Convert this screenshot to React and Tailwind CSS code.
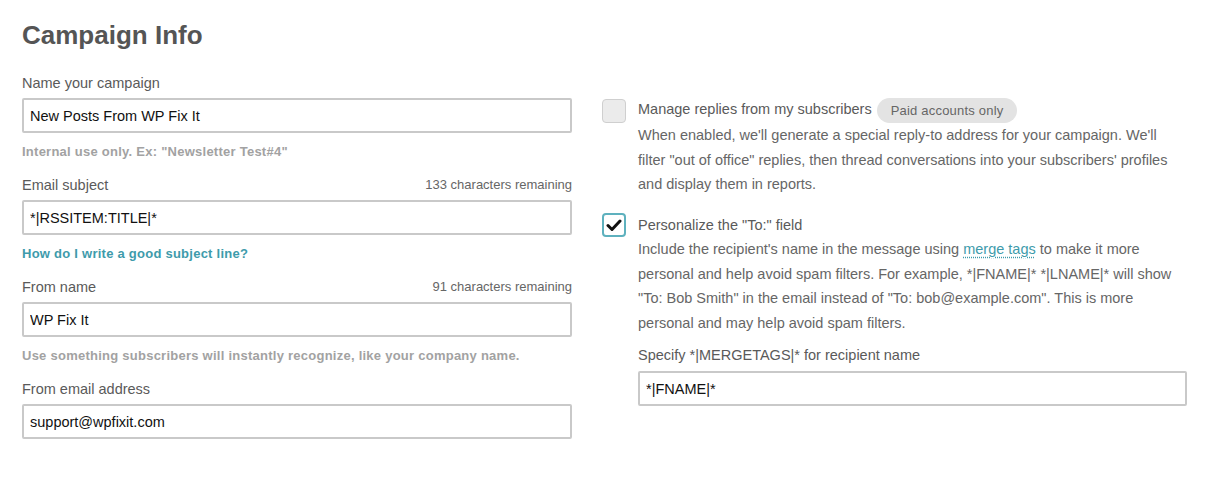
import React from "react";

const font = { fontFamily: '"Liberation Sans", Arial, sans-serif' };

const Field = ({ label, value, counter, help, link }) => (
  <div className="mb-[15px]">
    <div className="flex h-[20px] items-center justify-between mb-[5px]">
      <span className="text-[14.5px] leading-[20px] text-[#5a5a5a]">{label}</span>
      {counter && (
        <span className="text-[13px] leading-[20px] text-[#666]">{counter}</span>
      )}
    </div>
    <input
      type="text"
      defaultValue={value}
      className="block w-full h-[35px] border-2 border-[#c9c9c9] rounded-[2px] px-[6px] text-[14.5px] text-[#111] bg-white outline-none"
    />
    {help && (
      <p className="mt-[11px] h-[16px] text-[13px] leading-[16px] font-bold tracking-[0.25px] text-[#a2a2a2]">
        {help}
      </p>
    )}
    {link && (
      <p className="mt-[11px] h-[16px] text-[13px] leading-[16px] font-bold tracking-[0.25px] text-[#3e9bab]">
        {link}
      </p>
    )}
  </div>
);

const CheckIcon = () => (
  <svg width="16" height="13" viewBox="0 0 16 13" fill="none">
    <path d="M2 6.5 L6 10.5 L14 2" stroke="#111" strokeWidth="3" strokeLinecap="round" strokeLinejoin="round" />
  </svg>
);

export default function App() {
  return (
    <div style={font} className="bg-white w-[1220px] h-[484px] px-[22px] pt-[20px]">
      <h1 className="text-[26px] leading-[30px] font-bold text-[#555]">Campaign Info</h1>
      <div className="flex mt-[23px]">
        <div className="w-[550px] shrink-0">
          <Field
            label="Name your campaign"
            value="New Posts From WP Fix It"
            help={'Internal use only. Ex: "Newsletter Test#4"'}
          />
          <Field
            label="Email subject"
            value="*|RSSITEM:TITLE|*"
            counter="133 characters remaining"
            link="How do I write a good subject line?"
          />
          <Field
            label="From name"
            value="WP Fix It"
            counter="91 characters remaining"
            help="Use something subscribers will instantly recognize, like your company name."
          />
          <Field label="From email address" value="support@wpfixit.com" />
        </div>

        <div className="ml-[30px] w-[585px] mt-[24px] text-[14.5px] text-[#666]">
          <div className="flex">
            <div className="w-[24px] h-[24px] mt-[2px] rounded-[4px] border border-[#cfcfcf] bg-[#ebebeb] shrink-0" />
            <div className="ml-[12px] flex-1">
              <div className="flex items-center h-[26px]">
                <span className="text-[#5a5a5a]">Manage replies from my subscribers</span>
                <span className="ml-[5px] h-[25px] px-[14px] rounded-full bg-[#e3e3e3] text-[13px] tracking-[0.2px] leading-[25px] text-[#666]">
                  Paid accounts only
                </span>
              </div>
              <p className="leading-[24.5px] whitespace-nowrap">
                When enabled, we'll generate a special reply-to address for your campaign. We'll
                <br />
                filter "out of office" replies, then thread conversations into your subscribers' profiles
                <br />
                and display them in reports.
              </p>
            </div>
          </div>

          <div className="flex mt-[16.5px]">
            <div className="w-[24px] h-[24px] rounded-[4px] border-2 border-[#5eb1be] bg-white shrink-0 flex items-center justify-center">
              <CheckIcon />
            </div>
            <div className="ml-[12px] flex-1">
              <div className="h-[24px] leading-[24px] text-[#5a5a5a]">Personalize the "To:" field</div>
              <p className="leading-[24.5px] whitespace-nowrap">
                Include the recipient's name in the message using{" "}
                <a className="text-[#3e9bab] underline decoration-dotted decoration-[#3e9bab] underline-offset-[3px]">merge tags</a>{" "}
                to make it more
                <br />
                personal and help avoid spam filters. For example, *|FNAME|* *|LNAME|* will show
                <br />
                "To: Bob Smith" in the email instead of "To: bob@example.com". This is more
                <br />
                personal and may help avoid spam filters.
              </p>
              <div className="mt-[10px] h-[20px] leading-[20px] text-[#5a5a5a]">
                Specify *|MERGETAGS|* for recipient name
              </div>
              <input
                type="text"
                defaultValue="*|FNAME|*"
                className="block mt-[6px] w-[549px] h-[35px] border-2 border-[#c9c9c9] rounded-[2px] px-[6px] text-[14.5px] text-[#111] bg-white outline-none"
              />
            </div>
          </div>
        </div>
      </div>
    </div>
  );
}
